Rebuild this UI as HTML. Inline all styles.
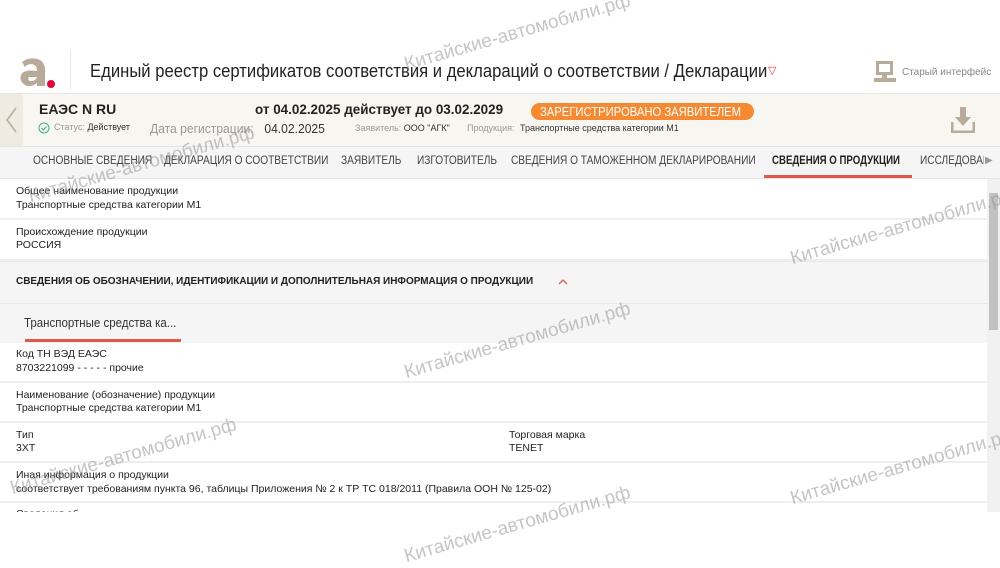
<!DOCTYPE html>
<html><head><meta charset="utf-8"><style>
*{margin:0;padding:0;box-sizing:border-box}
body{width:1000px;height:563px;overflow:hidden;background:#fff;font-family:"Liberation Sans",sans-serif;color:#222;position:relative}
.a{position:absolute;white-space:nowrap}
.n{transform:scaleX(.88);transform-origin:0 0}
.row{position:absolute;left:0;width:987px;border-bottom:2px solid #eee}
.l{font-size:10.5px;color:#222}
.wm{position:absolute;font-size:19px;color:rgba(150,150,150,.55);transform:rotate(-16deg);transform-origin:left bottom;white-space:nowrap}
.t{top:155px;font-size:11.5px;color:#444}
</style></head><body>
<!-- header -->
<svg class="a" style="left:18px;top:56px" width="40" height="34" viewBox="0 0 40 34">
<path d="M4 6 Q12 0 22 4 Q28 8 27 18 L27 30 L19 30 L19 27 Q13 32 7 29 Q1 25 3 19 Q6 13 19 15 Q19 9 14 8 Q9 8 7 11 Z M11 21 Q9 24 12 25 Q17 26 19 21 Z" fill="#b7aa99"/>
<circle cx="33" cy="28" r="4" fill="#e4003a"/></svg>
<div class="a" style="left:70px;top:50px;width:1px;height:40px;background:#e6e6e6"></div>
<div class="a" style="left:90px;top:60px;font-size:18.5px;color:#222;transform:scaleX(.9);transform-origin:0 0">Единый реестр сертификатов соответствия и деклараций о соответствии / Декларации</div>
<div class="a" style="left:768px;top:64px;color:#e33;font-size:11px">▽</div>
<svg class="a" style="left:873px;top:60px" width="24" height="24" viewBox="0 0 24 24"><rect x="3" y="1" width="17" height="14" fill="#b8ab9a"/><rect x="6" y="4" width="11" height="8" fill="#fff"/><rect x="9" y="15" width="5" height="3" fill="#b8ab9a"/><rect x="1" y="18" width="22" height="4" fill="#b8ab9a"/></svg>
<div class="a" style="left:902px;top:66px;font-size:10.5px;color:#888;transform:scaleX(.95);transform-origin:0 0">Старый интерфейс</div>
<!-- info bar -->
<div class="a" style="left:0;top:93px;width:1000px;height:54px;background:#f8f6f1;border-top:1px solid #e8e8e8;border-bottom:1px solid #e4e4e4"></div>
<div class="a" style="left:0;top:94px;width:23px;height:52px;background:#efebe2"></div>
<svg class="a" style="left:4px;top:106px" width="14" height="28"><path d="M12 2 L3 14 L12 26" stroke="#b8ab9a" stroke-width="1.5" fill="none"/></svg>
<div class="a" style="left:39px;top:101px;font-size:14px;font-weight:bold;color:#222">ЕАЭС N RU</div>
<svg class="a" style="left:38px;top:122px" width="12" height="12"><circle cx="6" cy="6" r="5" stroke="#3bb08f" fill="none"/><path d="M3.5 6 L5.5 8 L8.5 4.5" stroke="#3bb08f" fill="none"/></svg>
<div class="a" style="left:54px;top:122px;font-size:9px;color:#999">Статус: <span style="color:#333">Действует</span></div>
<div class="a" style="left:150px;top:121px;font-size:13px;color:#999;transform:scaleX(.93);transform-origin:0 0">Дата регистрации: <span style="color:#333;margin-left:8px">04.02.2025</span></div>
<div class="a" style="left:255px;top:101px;font-size:14px;font-weight:bold;color:#222;transform:scaleX(.96);transform-origin:0 0">от 04.02.2025 действует до 03.02.2029</div>
<div class="a" style="left:531px;top:103px;width:223px;height:17px;border-radius:9px;background:#f58a32"></div>
<div class="a" style="left:540px;top:104px;color:#fff;font-size:12.5px;line-height:16px;transform:scaleX(.9);transform-origin:0 0">ЗАРЕГИСТРИРОВАНО ЗАЯВИТЕЛЕМ</div>
<div class="a" style="left:355px;top:123px;font-size:9px;color:#999">Заявитель: <span style="color:#333">ООО "АГК"</span></div>
<div class="a" style="left:467px;top:123px;font-size:9px;color:#999">Продукция: <span style="color:#333;margin-left:3px">Транспортные средства категории М1</span></div>
<svg class="a" style="left:951px;top:107px" width="24" height="26"><rect x="9" y="0" width="6" height="10" fill="#b8ab9a"/><path d="M4 10 L20 10 L12 19Z" fill="#b8ab9a"/><path d="M1 15 L1 25 L23 25 L23 15" stroke="#b8ab9a" stroke-width="3" fill="none"/></svg>
<!-- tabs -->
<div class="a" style="left:0;top:147px;width:1000px;height:32px;background:#f5f5f5;border-bottom:1px solid #e4e4e4"></div>
<div class="a t n" style="left:33px">ОСНОВНЫЕ СВЕДЕНИЯ</div>
<div class="a t n" style="left:164px">ДЕКЛАРАЦИЯ О СООТВЕТСТВИИ</div>
<div class="a t n" style="left:341px">ЗАЯВИТЕЛЬ</div>
<div class="a t n" style="left:417px">ИЗГОТОВИТЕЛЬ</div>
<div class="a t n" style="left:511px">СВЕДЕНИЯ О ТАМОЖЕННОМ ДЕКЛАРИРОВАНИИ</div>
<div class="a t n" style="left:772px;color:#222;font-weight:bold;transform:scaleX(.84)">СВЕДЕНИЯ О ПРОДУКЦИИ</div>
<div class="a" style="top:175px;left:764px;width:148px;height:3px;background:#e0584a"></div>
<div class="a" style="top:147px;left:920px;width:64px;height:31px;overflow:hidden"><div class="a t n" style="left:0;top:8px">ИССЛЕДОВАНИЯ</div></div>
<div class="a" style="top:155px;left:985px;font-size:10px;color:#999">▶</div>
<!-- scrollbar -->
<div class="a" style="left:987px;top:179px;width:13px;height:333px;background:#f1f1f1"></div>
<div class="a" style="left:989px;top:193px;width:9px;height:137px;background:#c1c1c1"></div>
<!-- content -->
<div class="row" style="top:179px;height:41px"></div>
<div class="a l" style="left:16px;top:185px">Общее наименование продукции</div>
<div class="a l" style="left:16px;top:199px">Транспортные средства категории М1</div>
<div class="row" style="top:220px;height:41px"></div>
<div class="a l" style="left:16px;top:226px">Происхождение продукции</div>
<div class="a l" style="left:16px;top:239px">РОССИЯ</div>
<div class="a" style="left:0;top:261px;width:987px;height:82px;background:#f5f5f5;border-top:1px solid #e8e8e8"></div>
<div class="a" style="left:0;top:303px;width:987px;height:1px;background:#e8e8e8"></div>
<div class="a" style="left:16px;top:275px;font-size:10.5px;font-weight:bold;color:#222;transform:scaleX(.95);transform-origin:0 0">СВЕДЕНИЯ ОБ ОБОЗНАЧЕНИИ, ИДЕНТИФИКАЦИИ И ДОПОЛНИТЕЛЬНАЯ ИНФОРМАЦИЯ О ПРОДУКЦИИ</div>
<svg class="a" style="left:557px;top:278px" width="12" height="8"><path d="M2 6 L6 2 L10 6" stroke="#e0584a" fill="none" stroke-width="1.3"/></svg>
<div class="a" style="left:24px;top:316px;font-size:12.5px;color:#333;transform:scaleX(.92);transform-origin:0 0">Транспортные средства ка...</div>
<div class="a" style="left:25px;top:339px;width:156px;height:3px;background:#e0584a"></div>
<div class="row" style="top:343px;height:40px"></div>
<div class="a l" style="left:16px;top:348px">Код ТН ВЭД ЕАЭС</div>
<div class="a l" style="left:16px;top:362px">8703221099 - - - - - прочие</div>
<div class="row" style="top:383px;height:40px"></div>
<div class="a l" style="left:16px;top:389px">Наименование (обозначение) продукции</div>
<div class="a l" style="left:16px;top:402px">Транспортные средства категории М1</div>
<div class="row" style="top:423px;height:40px"></div>
<div class="a l" style="left:16px;top:429px">Тип</div>
<div class="a l" style="left:16px;top:442px">3XT</div>
<div class="a l" style="left:509px;top:429px">Торговая марка</div>
<div class="a l" style="left:509px;top:442px">TENET</div>
<div class="row" style="top:463px;height:40px"></div>
<div class="a l" style="left:16px;top:469px">Иная информация о продукции</div>
<div class="a l" style="left:16px;top:483px">соответствует требованиям пункта 96, таблицы Приложения № 2 к ТР ТС 018/2011 (Правила ООН № 125-02)</div>
<div class="a" style="left:0;top:503px;width:987px;height:9px;overflow:hidden"><div class="l" style="position:absolute;left:16px;top:5px">Сведения об</div></div>
<!-- watermarks -->
<div class="wm" style="left:408px;top:54px">Китайские-автомобили.рф</div>
<div class="wm" style="left:32px;top:186px">Китайские-автомобили.рф</div>
<div class="wm" style="left:794px;top:248px">Китайские-автомобили.рф</div>
<div class="wm" style="left:408px;top:362px">Китайские-автомобили.рф</div>
<div class="wm" style="left:14px;top:478px">Китайские-автомобили.рф</div>
<div class="wm" style="left:794px;top:488px">Китайские-автомобили.рф</div>
<div class="wm" style="left:408px;top:546px">Китайские-автомобили.рф</div>
</body></html>
